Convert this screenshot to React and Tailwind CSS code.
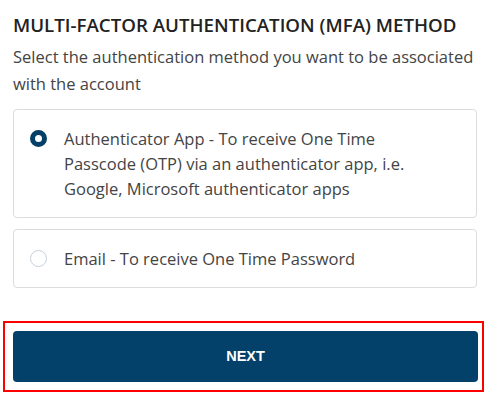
import React, { useState } from 'react';

const options = [
  {
    id: 'app',
    label: 'Authenticator App - To receive One Time Passcode (OTP) via an authenticator app, i.e. Google, Microsoft authenticator apps',
  },
  { id: 'email', label: 'Email - To receive One Time Password' },
];

function Radio({ checked }) {
  return checked ? (
    <span className="mt-[4px] block h-[17px] w-[17px] shrink-0 rounded-full border-[5.5px] border-[#033f66] bg-white" />
  ) : (
    <span className="mt-[4px] block h-[17px] w-[17px] shrink-0 rounded-full border-[1.5px] border-[#c8d0d8] bg-white" />
  );
}

export default function App() {
  const [method, setMethod] = useState('app');

  return (
    <div className="h-[397px] w-[489px] bg-white font-['Open_Sans',sans-serif]">
      <div className="pl-[13px] pr-[12px] pt-[12px]">
        <h1 className="text-[18.7px] font-semibold leading-[26px] text-[#222]">
          MULTI-FACTOR AUTHENTICATION (MFA) METHOD
        </h1>
        <p className="mt-[5px] text-[16.5px] leading-[27px] text-[#444]">
          Select the authentication method you want to be associated with the account
        </p>

        <div className="mt-[12px] flex flex-col gap-[11px]">
          {options.map((o) => (
            <button
              key={o.id}
              onClick={() => setMethod(o.id)}
              className="flex items-start gap-[17px] rounded-[4px] border-[1.5px] border-[#dcdcdc] bg-white py-[16px] pl-[16px] pr-[40px] text-left"
            >
              <Radio checked={method === o.id} />
              <span className="text-[16.5px] leading-[25px] text-[#444]">{o.label}</span>
            </button>
          ))}
        </div>
      </div>

      <div className="ml-[3px] mt-[33px] w-[481px] border-2 border-[#f00] py-[8px] pl-[8px] pr-[4px]">
        <button className="flex h-[51px] w-full items-center justify-center rounded-[4px] bg-[#03416a] font-['Liberation_Sans',Arial,sans-serif] text-[14.5px] font-bold text-white">
          NEXT
        </button>
      </div>
    </div>
  );
}
